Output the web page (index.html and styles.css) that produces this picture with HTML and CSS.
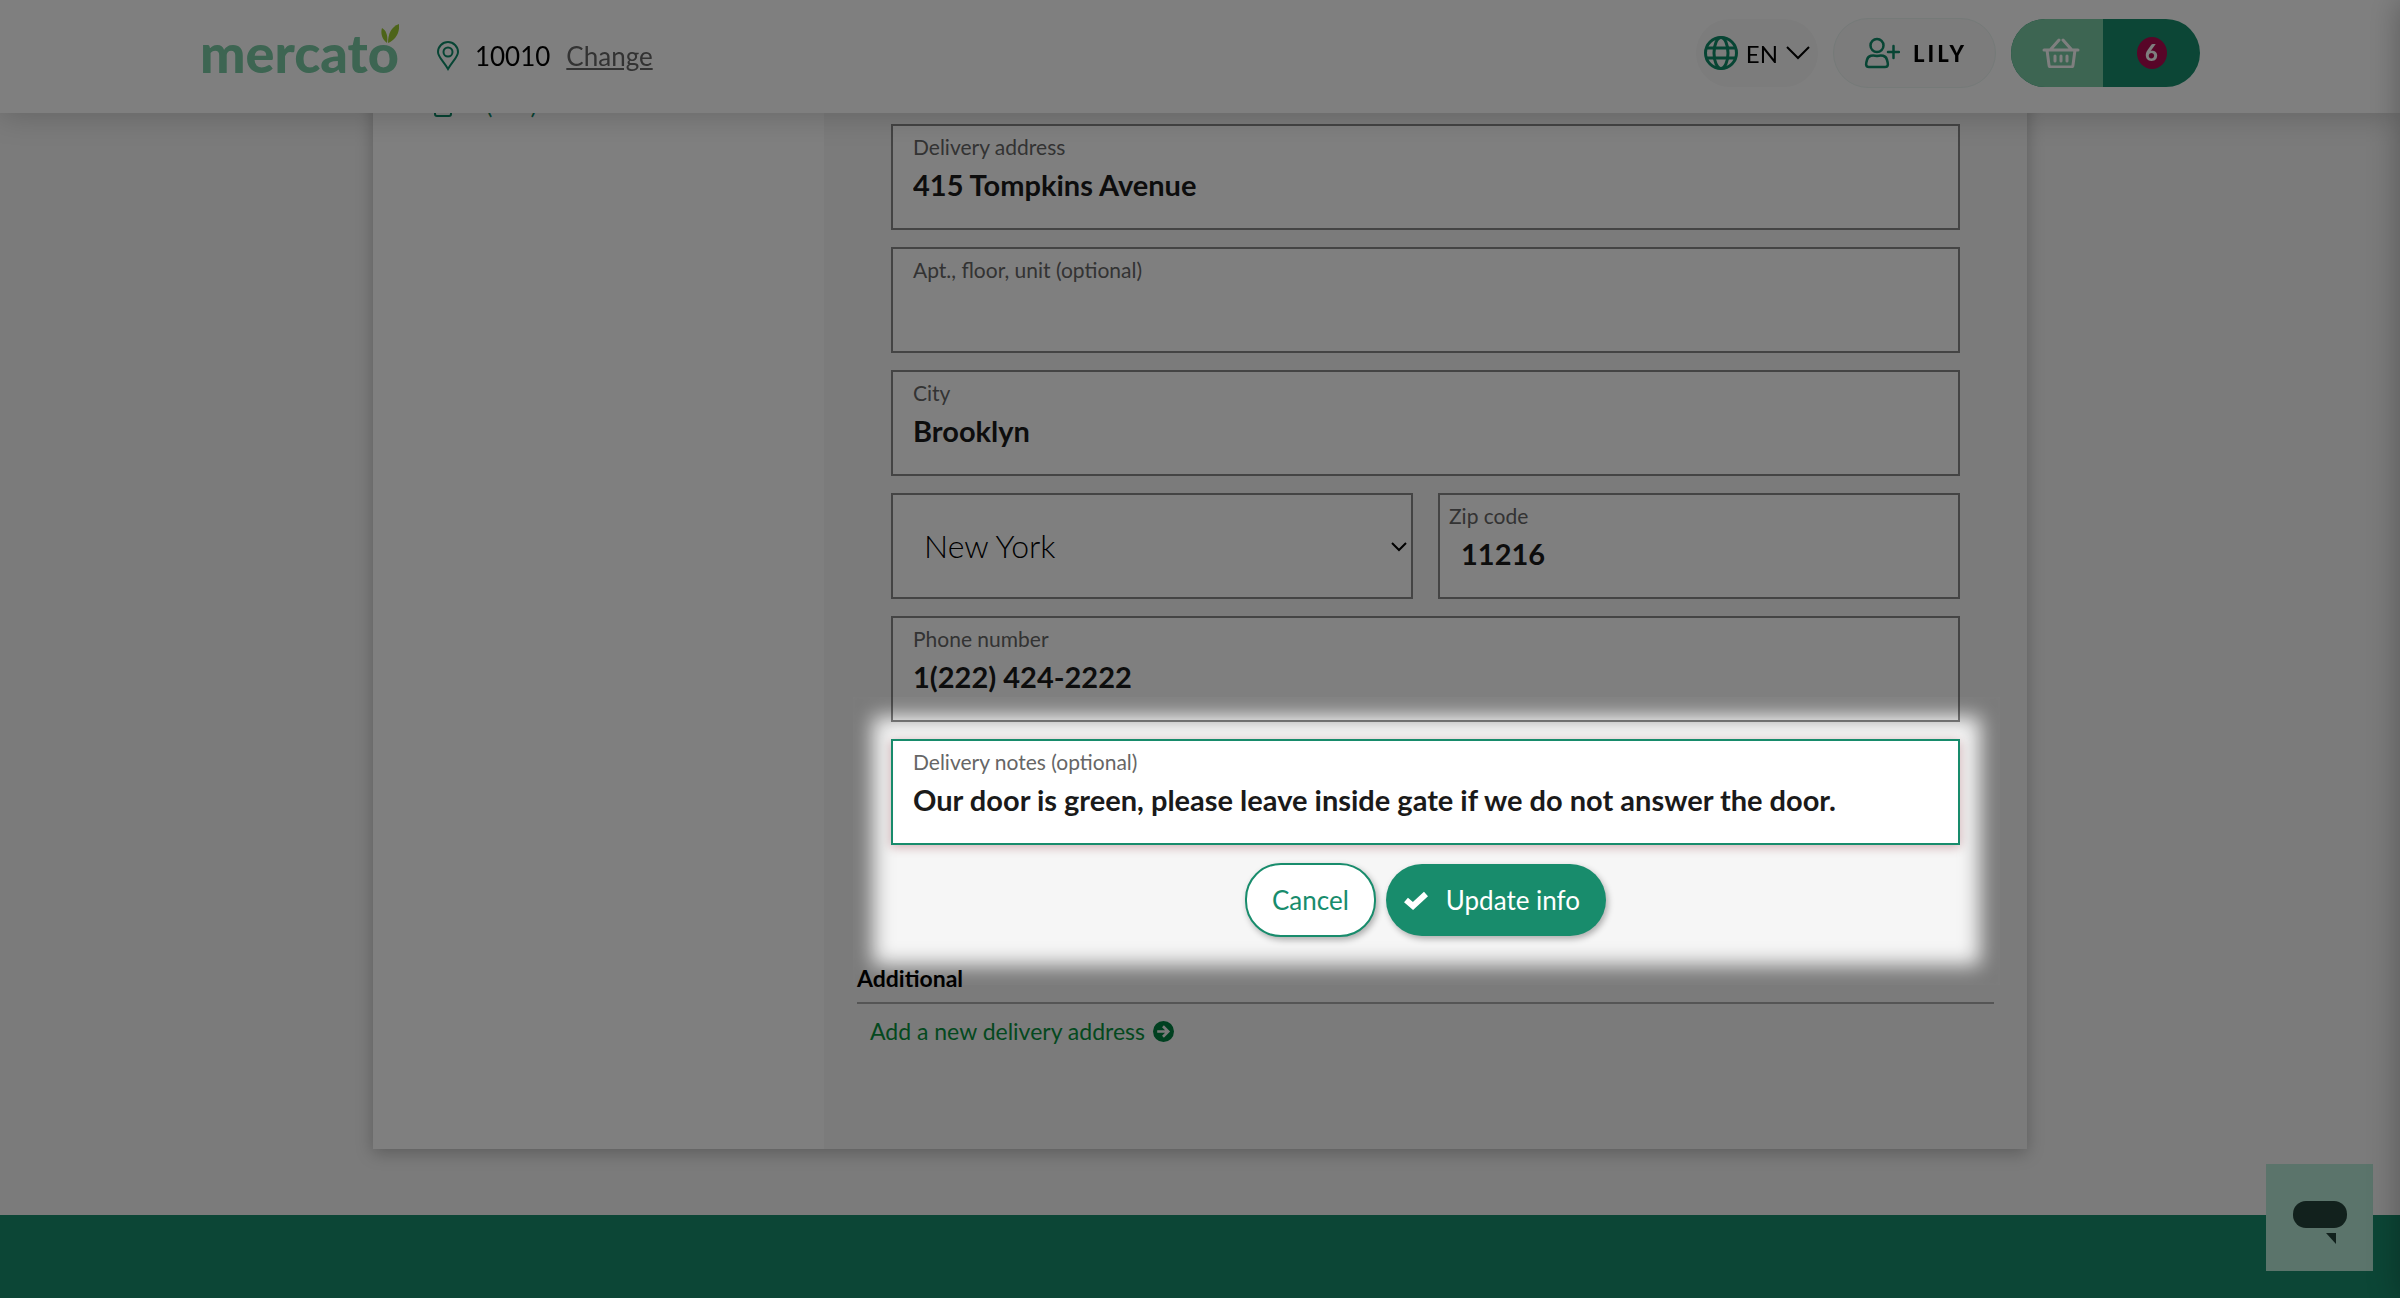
FILE: index.html
```
<!DOCTYPE html>
<html lang="en">
<head>
    <meta charset="utf-8">
    <title>Mercato</title>
    <link rel="stylesheet" href="styles.css">
</head>
<body>
    <header class="header">
        <div class="header-inner">
            <a href="#" class="logo">mercato
                <svg class="logo-leaf" viewBox="0 0 18 20" fill="#9bc832">
                    <path d="M6 19C2 16-1 10 1 4c5 3 6 9 5 15z"/>
                    <path d="M7 19C7 10 10 3 18 0c1 8-3 16-11 19z"/>
                </svg>
            </a>
            <div class="location">
                <svg width="22" height="30" viewBox="0 0 22 30" fill="none" stroke="#0e8a68" stroke-width="2">
                    <path d="M11 28C7 21 1 16 1 11a10 10 0 0 1 20 0c0 5-6 10-10 17z"/>
                    <circle cx="11" cy="11" r="4.500"/>
                </svg>
                <span class="zip">10010</span>
                <a href="#">Change</a>
            </div>
            <div class="header-actions">
                <button class="lang">
                    <svg width="34" height="34" viewBox="0 0 34 34" fill="none" stroke="#0e8a68" stroke-width="3">
                        <circle cx="17" cy="17" r="15.500"/>
                        <ellipse cx="17" cy="17" rx="7" ry="15.500"/>
                        <path d="M3 12h28M3 22h28"/>
                    </svg>
                    EN
                    <svg width="24" height="14" viewBox="0 0 24 14" fill="none" stroke="#000" stroke-width="2">
                        <path d="M1 1l11 11L23 1"/>
                    </svg>
                </button>
                <button class="user">
                    <svg width="36" height="32" viewBox="0 0 36 32" fill="none" stroke="#0e8a68" stroke-width="2.500" stroke-linecap="round">
                        <circle cx="13" cy="8.500" r="6.500"/>
                        <path d="M5 30c-4 0-3-4-2-7 1-5 6-5 10-4 4-1 9-1 10 4 1 3 2 7-2 7z"/>
                        <path d="M24 15h11M29.500 9v12"/>
                    </svg>
                    LILY
                </button>
                <button class="cart">
                    <span class="cart-basket">
                        <svg width="38" height="30" viewBox="0 0 38 30" fill="none" stroke="#fff" stroke-width="3" stroke-linecap="round">
                            <path d="M2 12h34M5 12l2 15q0 2 2 2h20q2 0 2-2l2-15M9 11l8-9M29 11l-8-9"/>
                            <path d="M13 18v5M19 18v5M25 18v5"/>
                        </svg>
                    </span>
                    <span class="cart-count"><span class="badge">6</span></span>
                </button>
            </div>
        </div>
    </header>

    <main class="card">
        <aside class="sidebar">
            <a href="#">
                <svg width="18" height="24" viewBox="0 0 18 24" fill="none" stroke="#0e8a68" stroke-width="2">
                    <rect x="1" y="1" width="16" height="22" rx="2"/>
                </svg>
                <span class="paren">(</span><span>)</span>
            </a>
        </aside>
        <div class="content">
            <form class="address-form">
                <label class="field">
                    <span>Delivery address</span>
                    <input type="text" value="415 Tompkins Avenue">
                </label>
                <label class="field">
                    <span>Apt., floor, unit (optional)</span>
                    <input type="text">
                </label>
                <label class="field">
                    <span>City</span>
                    <input type="text" value="Brooklyn">
                </label>
                <div class="field-row">
                    <div class="select-wrap">
                        <select aria-label="State">
                            <option>New York</option>
                        </select>
                        <svg class="select-arrow" width="16" height="10" viewBox="0 0 16 10" fill="none" stroke="#000" stroke-width="2">
                            <path d="M1 1l7 7 7-7"/>
                        </svg>
                    </div>
                    <label class="field field-zip">
                        <span>Zip code</span>
                        <input type="text" value="11216">
                    </label>
                </div>
                <label class="field">
                    <span>Phone number</span>
                    <input type="tel" value="1(222) 424-2222">
                </label>
                <div class="spotlight">
                    <label class="field field-active">
                        <span>Delivery notes (optional)</span>
                        <input type="text" value="Our door is green, please leave inside gate if we do not answer the door.">
                    </label>
                    <div class="form-actions">
                        <button type="button" class="btn btn-cancel">Cancel</button>
                        <button type="button" class="btn btn-update">
                            <svg width="24" height="19" viewBox="0 0 24 19" fill="none" stroke="#fff" stroke-width="6">
                                <path d="M2 9l7 6L22 3"/>
                            </svg>
                            Update info
                        </button>
                    </div>
                </div>
            </form>
            <h2>Additional</h2>
            <a href="#" class="add-link">
                Add a new delivery address
                <svg width="21" height="21" viewBox="0 0 20 20">
                    <circle cx="10" cy="10" r="10" fill="#008040"/>
                    <path d="M4 10h10M9.500 5l5 5-5 5" fill="none" stroke="#f5f5f5" stroke-width="2.500"/>
                </svg>
            </a>
        </div>
    </main>

    <footer class="footer"></footer>

    <button class="chat" aria-label="Chat">
        <svg width="54" height="44" viewBox="0 0 54 44" fill="#24423a">
            <rect width="54" height="27" rx="13"/>
            <path d="M33 32h10v11z"/>
        </svg>
    </button>
    <div class="drawer"></div>
</body>
</html>
```
FILE: styles.css
```
* {
    box-sizing: border-box;
}
body {
    margin: 0;
    min-height: 100vh;
    display: flex;
    flex-direction: column;
    font-family: Lato, "Liberation Sans", sans-serif;
    font-size: 21px;
    color: #000;
    background: #f6f6f6;
}
button, input, select {
    font-family: inherit;
}
button {
    cursor: pointer;
}
.header {
    position: fixed;
    top: 0;
    left: 0;
    right: 0;
    z-index: 10;
    background: #fff;
    box-shadow: 0 2px 30px rgba(0, 0, 0, 0.2);
}
.header-inner {
    max-width: 2000px;
    margin: 0 auto;
    padding: 18px 0 25px;
    display: flex;
    align-items: center;
}
.logo {
    position: relative;
    font-size: 54px;
    line-height: 70px;
    font-weight: 900;
    color: #7acaa4;
    text-decoration: none;
}
.logo-leaf {
    position: absolute;
    top: 6px;
    right: 0;
    width: 18px;
    height: 20px;
}
.location {
    display: flex;
    align-items: center;
    gap: 16px;
    margin-left: 38px;
    padding-top: 6px;
    font-size: 26px;
}
.location a {
    color: #666;
}
.header-actions {
    display: flex;
    align-items: center;
    gap: 15px;
    margin-left: auto;
}
.header-actions button {
    display: flex;
    align-items: center;
    border: none;
    border-radius: 36px;
    color: #000;
    background: #f8f8f8;
}
.header-actions .lang {
    gap: 8px;
    height: 68px;
    padding: 0 8px;
    font-size: 24px;
}
.header-actions .user {
    gap: 13px;
    height: 70px;
    padding: 0 28px 0 30px;
    border: 1px solid #eaf4f1;
    font-size: 22px;
    font-weight: 900;
    letter-spacing: 3px;
}
.header-actions .cart {
    height: 68px;
    padding: 0;
    overflow: hidden;
    background: #188c6c;
}
.cart-basket,
.cart-count {
    display: flex;
    align-items: center;
    justify-content: center;
    width: 92px;
    height: 68px;
}
.cart-basket {
    padding-left: 8px;
    background: #7acaa4;
}
.cart-count {
    width: 97px;
}
.badge {
    width: 30px;
    height: 32px;
    border-radius: 50%;
    background: #b00a50;
    color: #fff;
    font-size: 22px;
    line-height: 32px;
    font-weight: 900;
}
.card {
    display: flex;
    width: 100%;
    max-width: 1654px;
    margin: 0 auto 66px;
    background: #fff;
    box-shadow: 0 4px 16px rgba(0, 0, 0, 0.25);
}
.sidebar {
    flex: 0 0 451px;
    padding: 93px 61px 0;
}
.sidebar a {
    display: flex;
    align-items: center;
    color: #0e8a68;
    font-size: 24px;
    line-height: 24px;
    text-decoration: none;
}
.sidebar .paren {
    margin: 0 38px 0 34px;
}
.content {
    flex: 1;
    padding: 124px 33px 102px;
    background: #f6f6f6;
}
.address-form {
    display: flex;
    flex-direction: column;
    gap: 17px;
    padding: 0 34px;
}
.field {
    display: block;
    height: 106px;
    padding: 9px 20px;
    border: 2px solid #888;
    background: #fff;
}
.field span {
    display: block;
    line-height: 24px;
    color: #666;
}
.field input {
    display: block;
    width: 100%;
    height: 36px;
    margin-top: 7px;
    padding: 0;
    border: none;
    outline: none;
    background: none;
    color: #1a1a1a;
    font-size: 29px;
    font-weight: bold;
}
.field-row {
    display: grid;
    grid-template-columns: 1fr 1fr;
    gap: 25px;
}
.field-row .field-zip {
    padding-left: 9px;
}
.field-row .field-zip input {
    padding-left: 12px;
}
.select-wrap {
    position: relative;
}
.select-wrap select {
    width: 100%;
    height: 106px;
    padding: 0 31px 2px;
    border: 2px solid #888;
    border-radius: 0;
    appearance: none;
    background: #fff;
    color: #000;
    font-size: 32px;
    font-weight: 300;
}
.select-arrow {
    position: absolute;
    top: 49px;
    right: 6px;
}
/* dims the whole page except the notes field and its buttons */
.spotlight {
    position: relative;
}
.spotlight::after {
    content: "";
    position: absolute;
    z-index: 30;
    top: -42px;
    right: -40px;
    bottom: -48px;
    left: -38px;
    pointer-events: none;
    box-shadow: 0 0 0 9999px rgba(0, 0, 0, 0.5), inset 0 0 20px 20px rgba(0, 0, 0, 0.5);
}
.field-active {
    border-color: #188c6c;
    box-shadow: 0 2px 10px rgba(120, 0, 20, 0.3);
}
.form-actions {
    display: flex;
    align-items: center;
    justify-content: center;
    gap: 10px;
    margin-top: 18px;
}
.btn {
    display: flex;
    align-items: center;
    gap: 18px;
    height: 72px;
    border: none;
    border-radius: 36px;
    box-shadow: 2px 3px 6px rgba(0, 0, 0, 0.3);
    font-size: 26px;
}
.btn-cancel {
    height: 74px;
    padding: 0 25px;
    border: 2px solid #188c6c;
    background: #fff;
    color: #188c6c;
}
.btn-update {
    padding: 0 26px 0 18px;
    background: #188c6c;
    color: #fff;
}
.content h2 {
    margin: 26px 0 11px;
    padding-bottom: 9px;
    border-bottom: 2px solid #aaa;
    font-size: 23px;
    line-height: 30px;
}
.add-link {
    display: flex;
    align-items: center;
    gap: 8px;
    padding-left: 13px;
    color: #08923e;
    font-size: 23px;
    line-height: 32px;
    text-decoration: none;
}
.footer {
    flex: 1;
    min-height: 83px;
    background: #188c6c;
}
.chat {
    position: fixed;
    right: 27px;
    bottom: 27px;
    z-index: 10;
    width: 107px;
    height: 107px;
    padding: 14px 0 0;
    border: none;
    background: #b6e8d6;
}
/* closed cart drawer, only its shadow reaches into the window */
.drawer {
    position: fixed;
    top: 0;
    left: 100%;
    z-index: 20;
    width: 400px;
    height: 100%;
    box-shadow: 0 0 30px rgba(0, 0, 0, 0.3);
}
```
